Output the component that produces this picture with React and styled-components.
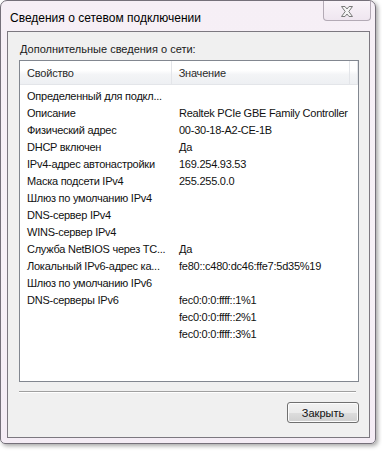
import React from "react";
import styled, { createGlobalStyle } from "styled-components";

const rows = [
  ["Определенный для подкл...", ""],
  ["Описание", "Realtek PCIe GBE Family Controller"],
  ["Физический адрес", "00-30-18-A2-CE-1B"],
  ["DHCP включен", "Да"],
  ["IPv4-адрес автонастройки", "169.254.93.53"],
  ["Маска подсети IPv4", "255.255.0.0"],
  ["Шлюз по умолчанию IPv4", ""],
  ["DNS-сервер IPv4", ""],
  ["WINS-сервер IPv4", ""],
  ["Служба NetBIOS через TC...", "Да"],
  ["Локальный IPv6-адрес ка...", "fe80::c480:dc46:ffe7:5d35%19"],
  ["Шлюз по умолчанию IPv6", ""],
  ["DNS-серверы IPv6", "fec0:0:0:ffff::1%1"],
  ["", "fec0:0:0:ffff::2%1"],
  ["", "fec0:0:0:ffff::3%1"],
];

export default function App() {
  return (
    <>
      <Global />
      <Page>
        <Window>
          <TitleBar>
            <Title>Сведения о сетевом подключении</Title>
            <CloseButton>
              <svg width="14" height="11" viewBox="0 0 14 11">
                <path
                  d="M1.5 0.5 H5 L7 3 L9 0.5 H12.5 L8.8 5.5 L12.5 10.5 H9 L7 8 L5 10.5 H1.5 L5.2 5.5 Z"
                  fill="#f4f4f4"
                  stroke="#7a7a7a"
                  strokeWidth="1"
                  strokeLinejoin="round"
                />
              </svg>
            </CloseButton>
          </TitleBar>
          <Client>
            <Label>Дополнительные сведения о сети:</Label>
            <ListBox>
              <Header>
                <HeadCell $w={153}>Свойство</HeadCell>
                <HeadCell $w={180}>Значение</HeadCell>
                <HeadCell $w={5} />
              </Header>
              <Body>
                {rows.map(([k, v], i) => (
                  <Row key={i}>
                    <Cell $w={152}>{k}</Cell>
                    <Cell>{v}</Cell>
                  </Row>
                ))}
              </Body>
            </ListBox>
            <Separator />
            <Footer>
              <Button>Закрыть</Button>
            </Footer>
          </Client>
        </Window>
      </Page>
    </>
  );
}

const Global = createGlobalStyle`
  body {
    margin: 0;
    background: #ffffff;
    font-family: "Liberation Sans", Arial, sans-serif;
  }
`;

const Page = styled.div`
  width: 382px;
  height: 452px;
  background: #ffffff;
  overflow: hidden;
`;

const Window = styled.div`
  width: 376px;
  height: 444px;
  box-sizing: border-box;
  border: 1px solid #75707a;
  border-radius: 7px 7px 5px 5px;
  background: linear-gradient(to bottom, #f6eff6 0%, #f7f1f7 60%, #f4ecf5 100%);
  box-shadow: 2px 2px 4px rgba(0, 0, 0, 0.35);
  display: flex;
  flex-direction: column;
`;

const TitleBar = styled.div`
  height: 30px;
  display: flex;
  justify-content: space-between;
  align-items: flex-start;
  padding-left: 9px;
`;

const Title = styled.div`
  font-size: 12px;
  color: #000;
  line-height: 14px;
  margin-top: 10px;
`;

const CloseButton = styled.div`
  width: 48px;
  height: 20px;
  margin-right: 4px;
  box-sizing: border-box;
  border: 1px solid #b3aab5;
  border-top: none;
  border-radius: 0 0 4px 4px;
  background: linear-gradient(to bottom, #f9f4f9, #efe6f0);
  display: flex;
  align-items: center;
  justify-content: center;
  padding-top: 2px;
`;

const Client = styled.div`
  margin: 0 5px 5px 6px;
  flex: 1;
  border: 1px solid #7c7880;
  background: #f0f0f0;
  padding: 9px 10px 0 11px;
  display: flex;
  flex-direction: column;
`;

const Label = styled.div`
  font-size: 11px;
  line-height: 16px;
  color: #1a1a1a;
  padding-left: 1px;
`;

const ListBox = styled.div`
  margin-top: 3px;
  height: 322px;
  box-sizing: border-box;
  border: 1px solid #828790;
  background: #ffffff;
  display: flex;
  flex-direction: column;
`;

const Header = styled.div`
  height: 23px;
  display: flex;
  background: linear-gradient(to bottom, #ffffff 0%, #ffffff 40%, #f3f4f6 60%, #eef0f3 100%);
  border-bottom: 1px solid #e3e5e9;
`;

const HeadCell = styled.div`
  width: ${(p) => p.$w}px;
  box-sizing: border-box;
  border-right: 1px solid #e3e5e9;
  font-size: 11px;
  letter-spacing: -0.2px;
  color: #2b2b2b;
  padding-left: 7px;
  display: flex;
  align-items: center;
`;

const Body = styled.div`
  padding-top: 2px;
`;

const Row = styled.div`
  display: flex;
  height: 17px;
  align-items: center;
  padding-left: 7px;
  font-size: 11px;
  letter-spacing: -0.25px;
  color: #111;
  white-space: nowrap;
`;

const Cell = styled.div`
  width: ${(p) => (p.$w ? p.$w + "px" : "auto")};
`;

const Separator = styled.div`
  margin-top: 9px;
  height: 1px;
  width: 337px;
  background: #a0a0a0;
  border-bottom: 1px solid #ffffff;
`;

const Footer = styled.div`
  display: flex;
  justify-content: flex-end;
  margin-top: 9px;
`;

const Button = styled.div`
  width: 72px;
  height: 21px;
  box-sizing: border-box;
  border: 1px solid #707070;
  border-radius: 3px;
  background: linear-gradient(to bottom, #f2f2f2 0%, #ebebeb 50%, #dddddd 51%, #cfcfcf 100%);
  box-shadow: inset 0 0 0 1px #fcfcfc;
  font-size: 11px;
  color: #111;
  display: flex;
  align-items: center;
  justify-content: center;
`;
